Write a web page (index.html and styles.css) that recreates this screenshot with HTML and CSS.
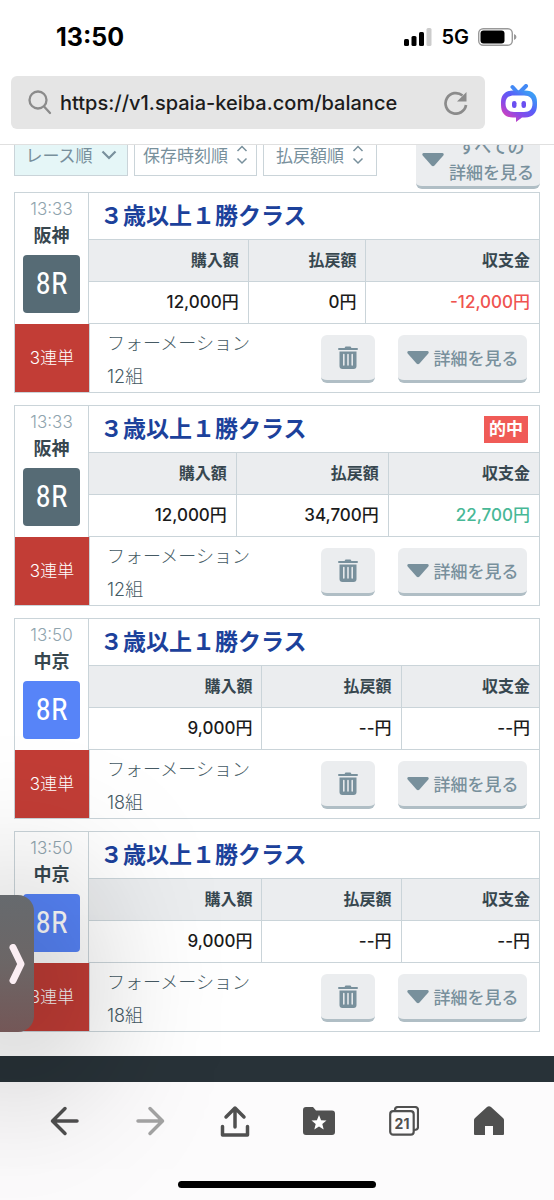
FILE: index.html
```
<!DOCTYPE html>
<html lang="ja">
<head>
    <meta charset="UTF-8">
    <meta name="viewport" content="width=device-width, initial-scale=1.0">
    <title>収支</title>
    <link rel="stylesheet" href="styles.css">
</head>
<body>
    <svg width="0" height="0" class="sprites" aria-hidden="true">
        <symbol id="trash" viewBox="0 0 20 24">
            <path d="M1 2h5.500l1-1.500h5l1 1.500H19q1 0 1 1t-1 1H1q-1 0-1-1t1-1z" fill="currentColor"/>
            <path d="M1.500 5.500h17V20q0 3-3 3h-11q-3 0-3-3z" fill="currentColor"/>
            <path d="M5.800 8.500v10.500M10 8.500v10.500M14.200 8.500v10.500" stroke="#ebedef" stroke-width="1.500" stroke-linecap="round"/>
        </symbol>
        <symbol id="down" viewBox="0 0 22 14">
            <path d="M1.500 0h19q2 .5.8 2.500L12.500 12.500q-1.500 1.500-3 0L.7 2.500Q-.5.5 1.500 0z" fill="currentColor"/>
        </symbol>
        <symbol id="updown" viewBox="0 0 12 20">
            <path d="M1.500 6L6 1.500 10.500 6M1.500 13.500L6 18l4.500-4.500" fill="none" stroke="currentColor" stroke-width="1.500"/>
        </symbol>
    </svg>

    <header class="browser">
        <div class="status">
            <span class="clock">13:50</span>
            <div class="signals">
                <svg width="28" height="18" viewBox="0 0 28 18">
                    <rect x="0" y="11" width="5" height="7" rx="1.500"/>
                    <rect x="7.500" y="8" width="5" height="10" rx="1.500"/>
                    <rect x="15" y="4" width="5" height="14" rx="1.500"/>
                    <rect x="22.500" y="0" width="5" height="18" rx="1.500" fill="#ccc"/>
                </svg>
                <span class="network">5G</span>
                <svg width="39" height="18" viewBox="0 0 39 18">
                    <rect x=".7" y=".7" width="33.600" height="16.600" rx="4.500" fill="none" stroke="#999" stroke-width="1.400"/>
                    <rect x="2.500" y="2.500" width="24" height="13" rx="3"/>
                    <path d="M36 6q2.500 1 2.500 3t-2.500 3z" fill="#999"/>
                </svg>
            </div>
        </div>
        <div class="address">
            <div class="address-box">
                <svg width="24" height="25" viewBox="0 0 24 25" fill="none" stroke="#8b8b8b" stroke-width="2.300" stroke-linecap="round">
                    <circle cx="10" cy="10" r="8.500"/>
                    <path d="M16.500 17l5.500 6"/>
                </svg>
                <input type="text" class="url" aria-label="URL" value="https://v1.spaia-keiba.com/balance">
                <button type="button" class="plain" aria-label="再読み込み">
                    <svg width="24" height="24" viewBox="0 0 24 24">
                        <path d="M18.500 4.500A10.300 10.300 0 1 0 22 14" fill="none" stroke="#8b8b8b" stroke-width="2.700"/>
                        <path d="M22.500 1v9.500H13z" fill="#8b8b8b"/>
                    </svg>
                </button>
            </div>
            <button type="button" class="plain" aria-label="アシスタント">
                <svg width="38" height="38" viewBox="0 0 38 38">
                    <defs>
                        <linearGradient id="bot" x1=".1" y1=".9" x2=".8" y2=".1">
                            <stop offset="0" stop-color="#e03fb4"/>
                            <stop offset=".35" stop-color="#8a4ae8"/>
                            <stop offset=".65" stop-color="#5a5cf8"/>
                            <stop offset="1" stop-color="#3d9bf5"/>
                        </linearGradient>
                    </defs>
                    <path d="M12.500 3l5 5.500M26 2l-7 7" stroke="#4389f5" stroke-width="4" stroke-linecap="round"/>
                    <path fill="url(#bot)" fill-rule="evenodd" d="M13 6.500h12C33 6.500 37 11 37 18v3c0 8-4 12-12 12.500h-3l-6 4.500v-4.500h-3C5 33.500 1 29 1 21v-3C1 11 5 6.500 13 6.500zM14 11.500c-6 0-8.500 3-8.500 8s2.500 8.500 8.500 8.500h10c6 0 8.500-3.500 8.500-8.500s-2.500-8-8.500-8z"/>
                    <rect x="12" y="17" width="4.500" height="7" rx="2.200" fill="#6a4ff0"/>
                    <rect x="21.500" y="17" width="4.500" height="7" rx="2.200" fill="#6a4ff0"/>
                </svg>
            </button>
        </div>
    </header>

    <main class="content">
        <div class="sort">
            <button type="button" class="sort-button active">レース順
                <svg width="16" height="10" viewBox="0 0 16 10"><path d="M1.500 1.500L8 8l6.500-6.500" fill="none" stroke="currentColor" stroke-width="2.200"/></svg>
            </button>
            <button type="button" class="sort-button">保存時刻順
                <svg width="12" height="20"><use href="#updown"/></svg>
            </button>
            <button type="button" class="sort-button">払戻額順
                <svg width="12" height="20"><use href="#updown"/></svg>
            </button>
            <button type="button" class="action all"><svg width="22" height="14"><use href="#down"/></svg><span>すべての<br>詳細を見る</span></button>
        </div>

        <article class="card">
            <div class="race">
                <time>13:33</time>
                <span class="place">阪神</span>
                <span class="number">8R</span>
            </div>
            <div class="result">
                <div class="title"><h2>３歳以上１勝クラス</h2></div>
                <table>
                    <thead>
                        <tr><th>購入額</th><th>払戻額</th><th>収支金</th></tr>
                    </thead>
                    <tbody>
                        <tr><td>12,000円</td><td>0円</td><td class="minus">-12,000円</td></tr>
                    </tbody>
                </table>
            </div>
            <div class="kind">3連単</div>
            <div class="ticket">
                <p>フォーメーション<br>12組</p>
                <button type="button" class="action delete" aria-label="削除"><svg width="20" height="24"><use href="#trash"/></svg></button>
                <button type="button" class="action detail"><svg width="22" height="14"><use href="#down"/></svg>詳細を見る</button>
            </div>
        </article>

        <article class="card">
            <div class="race">
                <time>13:33</time>
                <span class="place">阪神</span>
                <span class="number">8R</span>
            </div>
            <div class="result">
                <div class="title"><h2>３歳以上１勝クラス</h2><span class="hit">的中</span></div>
                <table>
                    <thead>
                        <tr><th>購入額</th><th>払戻額</th><th>収支金</th></tr>
                    </thead>
                    <tbody>
                        <tr><td>12,000円</td><td>34,700円</td><td class="plus">22,700円</td></tr>
                    </tbody>
                </table>
            </div>
            <div class="kind">3連単</div>
            <div class="ticket">
                <p>フォーメーション<br>12組</p>
                <button type="button" class="action delete" aria-label="削除"><svg width="20" height="24"><use href="#trash"/></svg></button>
                <button type="button" class="action detail"><svg width="22" height="14"><use href="#down"/></svg>詳細を見る</button>
            </div>
        </article>

        <article class="card">
            <div class="race">
                <time>13:50</time>
                <span class="place">中京</span>
                <span class="number open">8R</span>
            </div>
            <div class="result">
                <div class="title"><h2>３歳以上１勝クラス</h2></div>
                <table>
                    <thead>
                        <tr><th>購入額</th><th>払戻額</th><th>収支金</th></tr>
                    </thead>
                    <tbody>
                        <tr><td>9,000円</td><td>--円</td><td>--円</td></tr>
                    </tbody>
                </table>
            </div>
            <div class="kind">3連単</div>
            <div class="ticket">
                <p>フォーメーション<br>18組</p>
                <button type="button" class="action delete" aria-label="削除"><svg width="20" height="24"><use href="#trash"/></svg></button>
                <button type="button" class="action detail"><svg width="22" height="14"><use href="#down"/></svg>詳細を見る</button>
            </div>
        </article>

        <article class="card">
            <div class="race">
                <time>13:50</time>
                <span class="place">中京</span>
                <span class="number open">8R</span>
            </div>
            <div class="result">
                <div class="title"><h2>３歳以上１勝クラス</h2></div>
                <table>
                    <thead>
                        <tr><th>購入額</th><th>払戻額</th><th>収支金</th></tr>
                    </thead>
                    <tbody>
                        <tr><td>9,000円</td><td>--円</td><td>--円</td></tr>
                    </tbody>
                </table>
            </div>
            <div class="kind">3連単</div>
            <div class="ticket">
                <p>フォーメーション<br>18組</p>
                <button type="button" class="action delete" aria-label="削除"><svg width="20" height="24"><use href="#trash"/></svg></button>
                <button type="button" class="action detail"><svg width="22" height="14"><use href="#down"/></svg>詳細を見る</button>
            </div>
        </article>
    </main>

    <div class="site-footer"></div>

    <footer class="toolbar">
        <nav class="tools">
            <button type="button" class="plain" aria-label="戻る">
                <svg width="30" height="30" viewBox="0 0 30 30" fill="none" stroke="#505050" stroke-width="3.500" stroke-linecap="round" stroke-linejoin="round"><path d="M15 2.500L2.500 15 15 27.500M3 15h24"/></svg>
            </button>
            <button type="button" class="plain" aria-label="進む">
                <svg width="30" height="30" viewBox="0 0 30 30" fill="none" stroke="#a3a3a3" stroke-width="3.500" stroke-linecap="round" stroke-linejoin="round"><path d="M15 2.500L27.500 15 15 27.500M27 15H3"/></svg>
            </button>
            <button type="button" class="plain" aria-label="共有">
                <svg width="30" height="32" viewBox="0 0 30 32" fill="none" stroke="#505050" stroke-width="3.500" stroke-linecap="round" stroke-linejoin="round"><path d="M15 22V3M6 12l9-9 9 9M2.500 21.500V30h25v-8.500"/></svg>
            </button>
            <button type="button" class="plain" aria-label="ブックマーク">
                <svg width="32" height="28" viewBox="0 0 32 28"><path d="M3 0h7l3 3.500h16q3 0 3 3V25q0 3-3 3H3q-3 0-3-3V3q0-3 3-3z" fill="#505050"/><path d="M16 8l2.100 5.200 5.400.4-4.200 3.500 1.400 5.400-4.700-3-4.700 3 1.400-5.400-4.200-3.500 5.400-.4z" fill="#fff"/></svg>
            </button>
            <button type="button" class="plain" aria-label="タブ">
                <svg width="30" height="30" viewBox="0 0 30 30" fill="none" stroke="#505050" stroke-width="2.200"><path d="M6 5V4q0-3 3-3h17q3 0 3 3v17q0 3-4 3"/><rect x="1.200" y="5.200" width="23.500" height="23.500" rx="3"/><text x="13" y="22.500" text-anchor="middle" class="tab-count">21</text></svg>
            </button>
            <button type="button" class="plain" aria-label="ホーム">
                <svg width="30" height="30" viewBox="0 0 30 30"><path d="M13 1q2-1.500 4 0l12 11q1 1 1 2v14q0 1-1 1H19v-9h-8v9H1q-1 0-1-1V14q0-1 1-2z" fill="#505050"/></svg>
            </button>
        </nav>
        <div class="home-bar"></div>
    </footer>

    <button type="button" class="drawer" aria-label="開く">
        <svg width="16" height="40" viewBox="0 0 16 40"><path d="M4 3.500l8 16.500-8 16.500" fill="none" stroke="#fbeef3" stroke-width="7" stroke-linecap="round" stroke-linejoin="round"/></svg>
    </button>
</body>
</html>
```
FILE: styles.css
```
* {
    box-sizing: border-box;
}
body {
    margin: 0;
    min-height: 100vh;
    display: flex;
    flex-direction: column;
    background-color: #fff;
    color: #37474f;
    font-family: Inter, "Noto Sans CJK JP", sans-serif;
}
h2, p {
    margin: 0;
}
button {
    font-family: inherit;
    cursor: pointer;
}
svg {
    display: block;
    flex: none;
}
.sprites {
    position: absolute;
}
.plain {
    display: flex;
    padding: 0;
    border: none;
    background: none;
}

/* browser bar */
.browser {
    padding-bottom: 15px;
    border-bottom: 1px solid #e0e0e0;
}
.status {
    display: flex;
    justify-content: space-between;
    align-items: center;
    height: 76px;
    padding: 0 37px 2px 56px;
    color: #000;
}
.clock {
    font-size: 25px;
    font-weight: 700;
}
.signals {
    display: flex;
    align-items: center;
    gap: 9px;
}
.network {
    font-size: 20px;
    font-weight: 600;
}
.address {
    display: flex;
    align-items: center;
    gap: 15px;
    padding: 0 16px 0 11px;
}
.address-box {
    flex: 1;
    display: flex;
    align-items: center;
    gap: 8px;
    height: 53px;
    padding: 0 17px;
    border-radius: 6px;
    background-color: #e5e5e5;
}
.url {
    flex: 1;
    min-width: 0;
    padding: 0;
    border: none;
    background: none;
    color: #1c1c1c;
    font-family: inherit;
    font-size: 20px;
    font-weight: 500;
}

/* sort buttons */
.content {
    flex: 1;
    overflow: hidden;
    padding: 0 14px 24px;
}
.sort {
    display: flex;
    align-items: flex-start;
    gap: 6px;
    margin-top: -12px;
    margin-bottom: 3px;
}
.sort-button {
    display: flex;
    align-items: center;
    justify-content: center;
    gap: 8px;
    min-width: 114px;
    height: 43px;
    padding: 0 8px;
    border: 1px solid #cad4d9;
    background-color: #fff;
    color: #78909c;
    font-size: 17px;
    white-space: nowrap;
}
.sort-button.active {
    background-color: #e5f6f7;
}
.action {
    display: flex;
    align-items: center;
    justify-content: center;
    gap: 5px;
    height: 48px;
    padding: 0;
    border: none;
    border-bottom: 3px solid #b0bec5;
    border-radius: 6px;
    background-color: #ebedef;
    color: #78909c;
    font-size: 17px;
    font-weight: 500;
    white-space: nowrap;
}
.action.all {
    width: 124px;
    height: 56px;
    margin-left: auto;
    line-height: 26px;
}

/* race card */
.card {
    display: grid;
    grid-template-columns: 74px 1fr;
    margin-bottom: 12px;
    border: 1px solid #cad4d9;
}
.card:last-child {
    margin-bottom: 0;
}
.race {
    display: flex;
    flex-direction: column;
    align-items: center;
    padding-top: 3px;
    border-right: 1px solid #cad4d9;
}
.race time {
    color: #90a4ae;
    font-size: 17px;
    font-weight: 300;
    line-height: 26px;
}
.place {
    font-size: 18px;
    font-weight: 700;
    line-height: 28px;
}
.number {
    width: 57px;
    margin-top: 5px;
    border-radius: 4px;
    background-color: #566b75;
    color: #fff;
    font-family: "Liberation Sans Narrow", "Roboto Condensed", Roboto, sans-serif;
    font-size: 31px;
    line-height: 58px;
    text-align: center;
}
.number.open {
    background-color: #5784f8;
}
.title {
    display: flex;
    align-items: center;
    justify-content: space-between;
    height: 46px;
    padding: 0 11px;
}
.title h2 {
    color: #1c419b;
    font-size: 23px;
    font-weight: 700;
    line-height: 32px;
}
.hit {
    padding: 0 5px;
    background-color: #f05b57;
    color: #fff;
    font-size: 17px;
    font-weight: 700;
    line-height: 27px;
}
table {
    width: 100%;
    border-collapse: collapse;
}
th, td {
    height: 42px;
    padding: 0 9px 4px;
    border: 1px solid #cad4d9;
    text-align: right;
    white-space: nowrap;
}
th {
    background-color: #ebedef;
    font-size: 16px;
    font-weight: 700;
}
td {
    color: #1b1b1b;
    font-size: 17px;
    font-weight: 500;
}
th:first-child, td:first-child {
    border-left: none;
}
th:last-child, td:last-child {
    border-right: none;
}
.minus {
    color: #ef5350;
}
.plus {
    color: #48b896;
}
.kind {
    display: flex;
    align-items: center;
    justify-content: center;
    padding-bottom: 3px;
    background-color: #c23d36;
    color: #fff;
    font-size: 17px;
    font-weight: 300;
}
.ticket {
    display: flex;
    align-items: center;
    height: 68px;
    padding: 2px 12px 0 17px;
    border-left: 1px solid #cad4d9;
}
.ticket p {
    flex: 1;
    padding-top: 2px;
    color: #455a64;
    font-size: 18px;
    font-weight: 300;
    line-height: 33px;
}
.delete {
    width: 54px;
    margin-right: 23px;
}
.detail {
    width: 129px;
}

/* bottom of the screen */
.site-footer {
    height: 26px;
    background-color: #283238;
}
.toolbar {
    height: 118px;
    background-color: #fcfbfc;
}
.tools {
    display: grid;
    grid-template-columns: repeat(6, 1fr);
    justify-items: center;
    align-items: center;
    height: 78px;
    padding: 0 23px;
}
.tab-count {
    fill: #505050;
    stroke: none;
    font-size: 14px;
    font-weight: 700;
}
.home-bar {
    width: 198px;
    height: 7px;
    margin: 21px auto 0;
    border-radius: 4px;
    background-color: #000;
}
.drawer {
    position: fixed;
    left: 0;
    bottom: 168px;
    width: 34px;
    height: 137px;
    padding: 0 0 0 9px;
    border: none;
    border-radius: 0 16px 16px 0;
    background-image: linear-gradient(#666a6e, #6c6666 50%, #745757);
    box-shadow: 0 20px 150px 30px rgba(0, 0, 0, 0.35);
}
```
